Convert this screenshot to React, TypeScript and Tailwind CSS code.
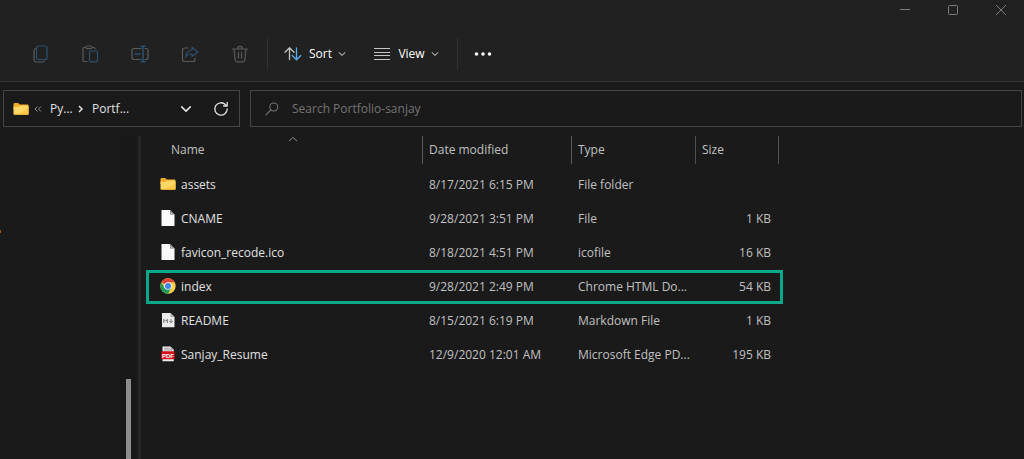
import type { ReactNode } from "react";

type FileKind = "folder" | "blank" | "chrome" | "markdown" | "pdf";

type FileEntry = {
  name: string;
  modified: string;
  type: string;
  size: string;
  kind: FileKind;
  highlighted?: boolean;
};

const files: FileEntry[] = [
  { name: "assets", modified: "8/17/2021 6:15 PM", type: "File folder", size: "", kind: "folder" },
  { name: "CNAME", modified: "9/28/2021 3:51 PM", type: "File", size: "1 KB", kind: "blank" },
  { name: "favicon_recode.ico", modified: "8/18/2021 4:51 PM", type: "icofile", size: "16 KB", kind: "blank" },
  { name: "index", modified: "9/28/2021 2:49 PM", type: "Chrome HTML Do...", size: "54 KB", kind: "chrome", highlighted: true },
  { name: "README", modified: "8/15/2021 6:19 PM", type: "Markdown File", size: "1 KB", kind: "markdown" },
  { name: "Sanjay_Resume", modified: "12/9/2020 12:01 AM", type: "Microsoft Edge PD...", size: "195 KB", kind: "pdf" },
];

function FolderIcon() {
  return (
    <svg width="16" height="16" viewBox="0 0 16 16" aria-hidden="true">
      <path d="M0.5 3.2 Q0.5 2 1.6 2 H5.2 L6.8 3.6 H14.4 Q15.5 3.6 15.5 4.7 V8 H0.5Z" fill="#f0ab25" />
      <path d="M0.5 5.8 H5.4 L7 4.4 H14.6 Q15.5 4.4 15.5 5.3 V13 Q15.5 13.8 14.6 13.8 H1.4 Q0.5 13.8 0.5 13Z" fill="#ffd766" />
      <path d="M15.5 7 V13 Q15.5 13.8 14.6 13.8 H5Z" fill="#fdca48" />
      <path d="M1 13.3 H15" stroke="#e9a92c" strokeWidth="0.8" />
    </svg>
  );
}

function BlankFileIcon() {
  return (
    <svg width="16" height="18" viewBox="0 0 16 18" aria-hidden="true">
      <path d="M1.5 1 H10 L14.5 5.5 V17 H1.5Z" fill="#fafafa" />
      <path d="M10 1 V5.5 H14.5Z" fill="#6f6f6f" />
      <path d="M10.6 2.8 V4.8 H12.6Z" fill="#ededed" />
    </svg>
  );
}

function ChromeIcon() {
  return (
    <svg width="16" height="16" viewBox="0 0 48 48" aria-hidden="true">
      <circle cx="24" cy="24" r="23" fill="#fbd04a" />
      <path d="M24 24 L4.1 12.5 A23 23 0 0 1 43.9 12.5 H24Z" fill="#dd4437" />
      <path d="M4.1 12.5 A23 23 0 0 0 24 47 L34 29.8 L24 24 L14 29.8Z" fill="#229a5b" />
      <circle cx="24" cy="24" r="11.5" fill="#f4f4f4" />
      <circle cx="24" cy="24" r="9" fill="#4285f4" />
    </svg>
  );
}

function MarkdownIcon() {
  return (
    <svg width="16" height="16" viewBox="0 0 16 16" aria-hidden="true">
      <path d="M2 1 H10.5 L14.5 5 V15.2 H2Z" fill="#ececec" />
      <path d="M10.5 1 V5 H14.5Z" fill="#a8a8a8" />
      <path d="M3.8 11 V7.3 L5.6 9.3 L7.4 7.3 V11 M11 7 V10.6 M9.3 9 L11 10.8 L12.7 9" fill="none" stroke="#777" strokeWidth="1" />
    </svg>
  );
}

function PdfIcon() {
  return (
    <svg width="16" height="16" viewBox="0 0 16 16" aria-hidden="true">
      <path d="M2.5 0.5 H10.5 L13.8 3.8 V15.2 H2.5Z" fill="#ececec" />
      <path d="M10.5 0.5 V3.8 H13.8Z" fill="#aaa" />
      <path d="M4 2.3 H9.5 M4 4 H12" stroke="#8d8d8d" strokeWidth="0.8" />
      <rect x="1.3" y="5.2" width="13.4" height="8" rx="0.8" fill="#d3101c" />
      <text x="8" y="11.5" fontSize="6" fontWeight="700" fontFamily="Liberation Sans, sans-serif" textAnchor="middle" fill="#fff">
        PDF
      </text>
    </svg>
  );
}

const fileIcons: Record<FileKind, ReactNode> = {
  folder: <FolderIcon />,
  blank: <BlankFileIcon />,
  chrome: <ChromeIcon />,
  markdown: <MarkdownIcon />,
  pdf: <PdfIcon />,
};

function ChevronDown({ size = 8, className = "" }: { size?: number; className?: string }) {
  return (
    <svg width={size} height={size} viewBox="0 0 10 10" fill="none" stroke="currentColor" className={className} aria-hidden="true">
      <path d="M1.4 3.2 L5 6.8 L8.6 3.2" strokeWidth="1.3" strokeLinecap="round" strokeLinejoin="round" />
    </svg>
  );
}

function ToolButton({ label, children }: { label: string; children: ReactNode }) {
  return (
    <button type="button" aria-label={label} disabled className="flex h-8 w-[34px] items-center justify-center">
      <svg width="18" height="18" viewBox="0 0 18 18" fill="none" stroke="#5a5a5a" strokeWidth="1.2" strokeLinecap="round" strokeLinejoin="round" aria-hidden="true">
        {children}
      </svg>
    </button>
  );
}

function WindowButton({ label, children }: { label: string; children: ReactNode }) {
  return (
    <button type="button" aria-label={label} className="flex h-5 w-[46px] items-center justify-center text-[#7c7c7c]">
      <svg width="12" height="12" viewBox="0 0 12 12" fill="none" stroke="currentColor" aria-hidden="true">
        {children}
      </svg>
    </button>
  );
}

function TitleBar() {
  return (
    <div className="flex h-[38px] justify-end gap-[2px]">
      <WindowButton label="Minimize">
        <path d="M1 5.5 H11" />
      </WindowButton>
      <WindowButton label="Maximize">
        <rect x="1.5" y="1.5" width="9" height="9" rx="1" />
      </WindowButton>
      <WindowButton label="Close">
        <path d="M1 1 L11 11 M11 1 L1 11" />
      </WindowButton>
    </div>
  );
}

function Toolbar() {
  return (
    <div className="flex h-8 items-center pl-[23px]">
      <div className="flex gap-4">
        <ToolButton label="Copy">
          <path d="M4.5 3.5 Q3 4 3 5.5 V13.5 Q3 17 6 17 H11 Q12.5 17 13.3 16" />
          <rect x="5.5" y="1" width="10.5" height="13.5" rx="2" stroke="#2b516f" />
        </ToolButton>
        <ToolButton label="Paste">
          <path d="M4.5 2.5 H3 Q2 2.5 2 3.5 V15.5 Q2 16.5 3 16.5 H6 M11.5 2.5 H13 Q14 2.5 14 3.5 V4" />
          <rect x="5" y="1" width="6" height="2.6" rx="1.3" />
          <rect x="8.5" y="6" width="8" height="10.8" rx="1.2" stroke="#2b516f" />
        </ToolButton>
        <ToolButton label="Rename">
          <path d="M10 3.5 H3 Q1 3.5 1 5.5 V12.5 Q1 14.5 3 14.5 H10 M14 3.5 H15 Q17 3.5 17 5.5 V12.5 Q17 14.5 15 14.5 H14" />
          <path d="M4 9 H9 M12 1.5 V16.5 M10 1.2 H14 M10 16.8 H14" stroke="#2b516f" strokeWidth="1.5" />
        </ToolButton>
        <ToolButton label="Share">
          <path d="M7 3 H3.5 Q1.5 3 1.5 5 V14.5 Q1.5 16.5 3.5 16.5 H12 Q14 16.5 14 14.5 V13" />
          <path d="M11 2.2 L16.8 7 L11 11.5 V9 Q6.5 8.8 4.8 12 Q5.2 5.5 11 5Z" stroke="#2b516f" />
        </ToolButton>
        <ToolButton label="Delete">
          <path d="M1.5 4 H16.5 M6.5 4 Q6.5 1.3 9 1.3 Q11.5 1.3 11.5 4 M3 4 L4.2 15 Q4.4 16.8 6 16.8 H12 Q13.6 16.8 13.8 15 L15 4 M7.5 7.5 V13 M10.5 7.5 V13" />
        </ToolButton>
      </div>

      <div className="ml-[10px] h-8 w-px bg-[#313131]" />

      <button type="button" className="ml-4 flex items-center text-white">
        <svg width="18" height="16" viewBox="0 0 18 16" fill="none" strokeWidth="1.3" strokeLinecap="round" strokeLinejoin="round" aria-hidden="true">
          <path d="M5.5 13.5 V2 M1 6.2 L5.5 1.8 L10 6.2" stroke="#c4c4c4" />
          <path d="M12.5 2 V13.5 M8.2 9.5 L12.5 13.8 L16.8 9.5" stroke="#58aee8" />
        </svg>
        <span className="ml-[7px] w-[23px]">Sort</span>
        <ChevronDown className="ml-[6px] text-[#a8a8a8]" />
      </button>

      <button type="button" className="ml-[27px] flex items-center text-white">
        <svg width="18" height="14" viewBox="0 0 18 14" stroke="#c4c4c4" aria-hidden="true">
          <path d="M1 1.5 H17 M1 5.5 H17 M1 8.5 H17 M1 12.5 H17" />
        </svg>
        <span className="ml-[7px] w-[27px]">View</span>
        <ChevronDown className="ml-[6px] text-[#a8a8a8]" />
      </button>

      <div className="ml-[18px] h-8 w-px bg-[#313131]" />

      <button type="button" aria-label="See more" className="ml-4 text-white">
        <svg width="18" height="6" viewBox="0 0 18 6" fill="currentColor" aria-hidden="true">
          <circle cx="2.5" cy="3" r="1.8" />
          <circle cx="9" cy="3" r="1.8" />
          <circle cx="15.5" cy="3" r="1.8" />
        </svg>
      </button>
    </div>
  );
}

function AddressBar() {
  return (
    <div className="flex gap-[10px] pt-2 pr-[2px] pb-[9px] pl-[3px]">
      <nav aria-label="Path" className="flex h-[37px] w-[237px] items-center border border-[#454545] pl-[9px] text-[#e0e0e0]">
        <FolderIcon />
        <svg width="8" height="8" viewBox="0 0 8 8" fill="none" stroke="#909090" className="ml-[5px]" aria-hidden="true">
          <path d="M3.5 1.5 L1 4 L3.5 6.5 M7 1.5 L4.5 4 L7 6.5" />
        </svg>
        <a href="#parent" className="ml-2 w-5">Py...</a>
        <svg width="8" height="8" viewBox="0 0 8 8" fill="none" stroke="currentColor" className="ml-[7px]" aria-hidden="true">
          <path d="M2 1 L5 4 L2 7" strokeWidth="1.5" />
        </svg>
        <a href="#folder" className="ml-[7px]">Portf...</a>
        <button type="button" aria-label="Previous locations" className="ml-auto p-1">
          <ChevronDown size={12} />
        </button>
        <button type="button" aria-label="Refresh" className="ml-[17px] mr-[10px]">
          <svg width="16" height="16" viewBox="0 0 16 16" fill="none" stroke="currentColor" strokeWidth="1.3" strokeLinecap="round" strokeLinejoin="round" aria-hidden="true">
            <path d="M14.2 8 A6.2 6.2 0 1 1 12.6 3.8 L14 5 M14.2 1.5 V5 H10.6" />
          </svg>
        </button>
      </nav>

      <label className="flex h-[37px] flex-1 items-center border border-[#454545] pl-[14px]">
        <svg width="14" height="14" viewBox="0 0 14 14" fill="none" stroke="#747474" strokeWidth="1.1" strokeLinecap="round" aria-hidden="true">
          <circle cx="8.8" cy="5" r="4" />
          <path d="M5.8 8 L1 12.8" />
        </svg>
        <input
          type="search"
          aria-label="Search Portfolio-sanjay"
          placeholder="Search Portfolio-sanjay"
          className="ml-[13px] min-w-0 flex-1 bg-transparent text-[#e0e0e0] outline-none placeholder:text-[#747474]"
        />
      </label>
    </div>
  );
}

function Sidebar() {
  return (
    <aside className="flex w-[138px] shrink-0 justify-between">
      <div className="mt-[94px] h-[3px] w-px bg-[#a35b1d]" />
      <div className="flex w-[19px] flex-col items-center bg-[#181818] pt-[243px]">
        <div className="w-[5px] flex-1 bg-[#8c8c8c]" />
      </div>
    </aside>
  );
}

function FileTable() {
  return (
    <table className="ml-[5px] h-fit w-[637px] table-fixed border-collapse text-[#c0c0c0]">
      <thead>
        <tr className="h-8 text-left align-top">
          <th className="w-[276px] p-0 font-normal">
            <div className="flex h-7 pl-[25px]">
              <span className="w-[117px] leading-7">Name</span>
              <svg width="10" height="6" viewBox="0 0 10 6" fill="none" stroke="#8a8a8a" aria-hidden="true">
                <path d="M1 5 L5 1.5 L9 5" />
              </svg>
            </div>
          </th>
          <th className="w-[149px] p-0 font-normal">
            <div className="h-7 border-l border-[#5a5a5a] pl-[6px] leading-7">Date modified</div>
          </th>
          <th className="w-[124px] p-0 font-normal">
            <div className="h-7 border-l border-[#5a5a5a] pl-[6px] leading-7">Type</div>
          </th>
          <th className="p-0 font-normal">
            <div className="mr-1 h-7 border-x border-[#505050] pl-[6px] leading-7">Size</div>
          </th>
        </tr>
      </thead>
      <tbody>
        {files.map((file) => (
          <tr
            key={file.name}
            className={file.highlighted ? "h-[34px] outline-3 -outline-offset-3 outline-[#08a88a]" : "h-[34px]"}
          >
            <td className="p-0 pl-[14px]">
              <div className="flex items-center gap-[5px] text-[#e0e0e0]">
                <span className="pb-[2px]">{fileIcons[file.kind]}</span>
                <span>{file.name}</span>
              </div>
            </td>
            <td className="p-0 pl-[7px]">{file.modified}</td>
            <td className="p-0 pl-[7px] whitespace-nowrap">{file.type}</td>
            <td className="p-0 pr-3 text-right">{file.size}</td>
          </tr>
        ))}
      </tbody>
    </table>
  );
}

export default function App() {
  return (
    <div className="flex min-h-screen flex-col bg-[#1a1a1a] font-['Open_Sans','Noto_Sans',sans-serif] text-[12px] leading-4">
      <header className="border-b border-[#333333] bg-[#212121] pb-[11px]">
        <TitleBar />
        <Toolbar />
      </header>
      <AddressBar />
      <main className="flex flex-1">
        <Sidebar />
        <div className="w-[3px] shrink-0 bg-[#262626]" />
        <FileTable />
      </main>
    </div>
  );
}
